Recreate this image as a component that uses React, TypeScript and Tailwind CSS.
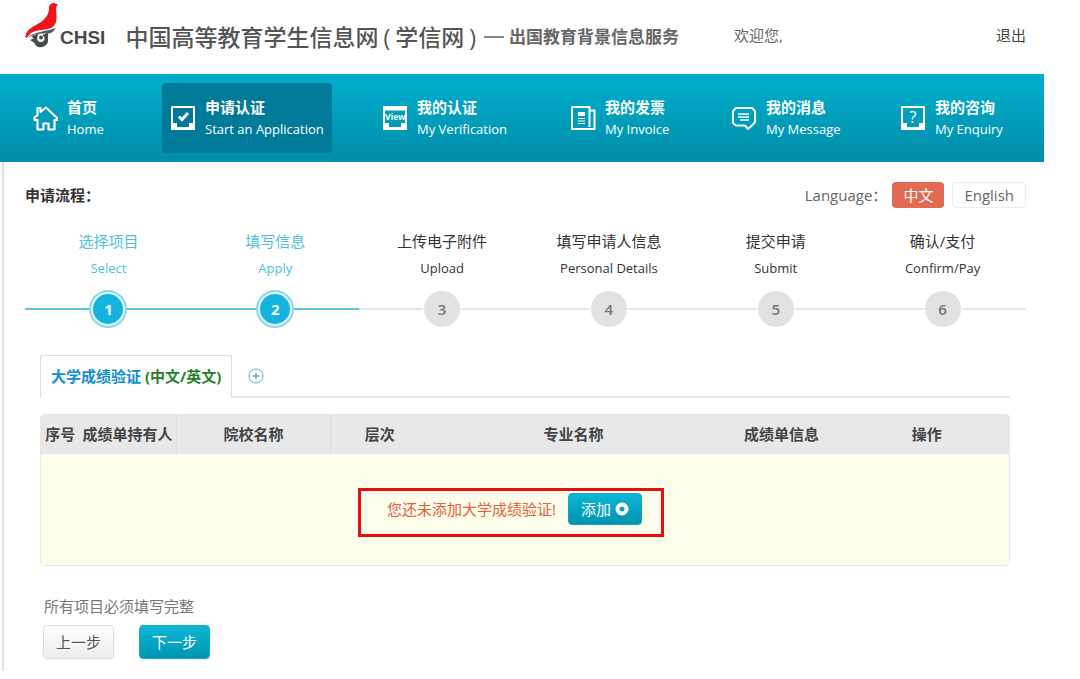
import type { ReactNode } from 'react'
import clsx from 'clsx'

interface NavItem {
  title: string
  subtitle: string
  icon: ReactNode
  active?: boolean
}

interface Step {
  title: string
  subtitle: string
  done?: boolean
}

function BirdLogo() {
  return (
    <svg viewBox="0 0 34 46" className="h-[46px] w-[34px] shrink-0" aria-hidden="true">
      <path
        d="M25 5C25.500 2 27.500 1 30 1L34 2.400L32.400 4.500C31.500 7 32.500 10 32.600 14C32.600 19 32 23 28 25.500C22 28.500 12 27.500 7 31L2 36.500C.8 34 2 31 4 28.500C7 25 12 23.500 17 20C22 16.500 25.500 11 25 5Z"
        fill="#f0141c"
      />
      <path d="M3.500 36C9 29.500 22 29.500 31.500 26C30.500 29.500 27 31.300 23.500 31.800C15 31 9 32.500 3.500 36Z" fill="#585c5d" />
      <path
        d="M7.500 34L15 31.500C12.500 34.500 12.500 39 16 40C19 40.500 21 38.500 20.500 35.500L18.500 33L24 31C24.500 34 23.500 37 24 40C22.500 44 18.500 46 14.500 45C12 44 11 42.500 10.500 41L6 38L9.500 36.500Z"
        fill="#454a4b"
      />
      <circle cx="17" cy="35.500" r="2" fill="#454a4b" />
    </svg>
  )
}

function NavIcon({ children }: { children: ReactNode }) {
  return (
    <svg viewBox="0 0 26 26" className="h-[26px] w-[26px] shrink-0" fill="none" stroke="white" strokeWidth="2" aria-hidden="true">
      {children}
    </svg>
  )
}

function Tray({ children }: { children: ReactNode }) {
  return (
    <NavIcon>
      <rect x="2" y="2" width="22" height="22" />
      <path d="M1 18H7V22H19V18H25V25H1Z" fill="white" stroke="none" />
      {children}
    </NavIcon>
  )
}

const navItems: NavItem[] = [
  {
    title: '首页',
    subtitle: 'Home',
    icon: (
      <NavIcon>
        <path
          d="M2.500 12.500L5.500 10V3H8.500V7L14 2.500L25 13V15H22.500V24.500H16.500V18.500H11.500V24.500H5.500V15H2.500Z"
          strokeWidth="2.200"
          strokeLinejoin="round"
        />
      </NavIcon>
    ),
  },
  {
    title: '申请认证',
    subtitle: 'Start an Application',
    active: true,
    icon: (
      <Tray>
        <path d="M9 11.500L12 14.500L18 8" strokeWidth="3" />
      </Tray>
    ),
  },
  {
    title: '我的认证',
    subtitle: 'My Verification',
    icon: (
      <Tray>
        <path d="M2 4H24" strokeWidth="3" />
        <text x="13" y="15" textAnchor="middle" fill="white" stroke="none" fontSize="9" fontWeight="700" fontFamily="Liberation Sans, sans-serif">
          View
        </text>
      </Tray>
    ),
  },
  {
    title: '我的发票',
    subtitle: 'My Invoice',
    icon: (
      <NavIcon>
        <path d="M19.500 22V2H2V24H24.500V5.500H20" />
        <path d="M8 9H15" strokeWidth="4" />
        <path d="M8 13.500H15M8 16H15M8 18.500H15" strokeWidth="1" />
      </NavIcon>
    ),
  },
  {
    title: '我的消息',
    subtitle: 'My Message',
    icon: (
      <NavIcon>
        <path d="M5 3H21L24 6V17L21 20.500L17 24L14 20.500H5L2 18V6Z" strokeLinejoin="round" />
        <path d="M7 9H18M7 12H18M9 15H18" strokeWidth="1.500" />
      </NavIcon>
    ),
  },
  {
    title: '我的咨询',
    subtitle: 'My Enquiry',
    icon: (
      <Tray>
        <text x="13" y="18" textAnchor="middle" fill="white" stroke="none" fontSize="16" fontFamily="Open Sans, sans-serif">
          ?
        </text>
      </Tray>
    ),
  },
]

const steps: Step[] = [
  { title: '选择项目', subtitle: 'Select', done: true },
  { title: '填写信息', subtitle: 'Apply', done: true },
  { title: '上传电子附件', subtitle: 'Upload' },
  { title: '填写申请人信息', subtitle: 'Personal Details' },
  { title: '提交申请', subtitle: 'Submit' },
  { title: '确认/支付', subtitle: 'Confirm/Pay' },
]

const columns = [
  { label: '序号', className: 'w-[4%]' },
  { label: '成绩单持有人', className: 'w-[10%] border-r border-[#dcdcdc]' },
  { label: '院校名称', className: 'w-[16%] border-r border-[#dcdcdc]' },
  { label: '层次', className: 'w-[10%]' },
  { label: '专业名称', className: 'w-[30%]' },
  { label: '成绩单信息', className: 'w-[13%]' },
  { label: '操作', className: 'w-[17%]' },
]

function Header() {
  return (
    <header className="flex items-center pb-6 pl-6 pr-[18px]">
      <a href="#" className="flex items-end text-[#4a4a4a]">
        <BirdLogo />
        <span className="ml-[2px] font-['Liberation_Sans',sans-serif] text-[19px] leading-[20px] font-bold">CHSI</span>
      </a>
      <h1 className="ml-5 flex items-center pt-6 text-[23px] leading-[26px] font-medium whitespace-nowrap text-[#555]">
        <span>中国高等教育学生信息网</span>
        <span className="mx-[5px]">(</span>
        <span>学信网</span>
        <span className="ml-[5px]">)</span>
        <span className="ml-2 h-[2px] w-5 bg-[#888]" />
        <span className="ml-[5px] text-[17px] font-bold text-[#666]">出国教育背景信息服务</span>
      </h1>
      <span className="ml-auto w-[262px] pt-5 text-[15px] leading-6 text-[#666]">欢迎您,</span>
      <a href="#" className="pt-5 text-[15px] leading-6 whitespace-nowrap text-[#444]">
        退出
      </a>
    </header>
  )
}

function MainNav() {
  return (
    <nav className="grid grid-cols-[138fr_212fr_188fr_161fr_169fr_152fr] bg-linear-to-b from-[#00afcd] to-[#008daa] py-[9px] pl-6">
      {navItems.map((item) => (
        <a
          key={item.title}
          href="#"
          className={clsx(
            'flex items-center gap-[9px] justify-self-start rounded px-2 py-[13px] whitespace-nowrap text-white',
            item.active && 'bg-[#007a99]',
          )}
        >
          {item.icon}
          <span className="flex flex-col">
            <span className="text-[15px] leading-[22px] font-bold">{item.title}</span>
            <span className="text-[13px] leading-[22px]">{item.subtitle}</span>
          </span>
        </a>
      ))}
    </nav>
  )
}

function StepList() {
  return (
    <ol className="mt-5 grid grid-cols-6">
      {steps.map((step, index) => (
        <li key={step.title} className={clsx('text-center', step.done ? 'text-[#4fc0e0]' : 'text-[#333]')}>
          <div className="text-[15px] leading-[27px]">{step.title}</div>
          <div className="text-[13px] leading-[27px]">{step.subtitle}</div>
          <div className="mt-2 flex items-center">
            <span className={clsx('h-[2px] flex-1', step.done ? 'bg-[#5cc3de]' : 'bg-[#dfe8ef]')} />
            {step.done ? (
              <span className="flex h-[38px] w-[38px] items-center justify-center rounded-full border-2 border-[#8ed8ec] bg-[#e2f6fb]">
                <span className="flex h-[30px] w-[30px] items-center justify-center rounded-full bg-[#14b4df] text-[15px] font-bold text-white">
                  {index + 1}
                </span>
              </span>
            ) : (
              <span className="flex h-[38px] w-[38px] items-center justify-center rounded-full border border-white bg-[#e2e2e2] text-[15px] font-semibold text-[#777]">
                {index + 1}
              </span>
            )}
            <span className={clsx('h-[2px] flex-1', step.done ? 'bg-[#5cc3de]' : 'bg-[#dfe8ef]')} />
          </div>
        </li>
      ))}
    </ol>
  )
}

function TranscriptTable() {
  return (
    <table className="mt-4 w-full table-fixed border-separate border-spacing-0 rounded border border-[#e8e8e8]">
      <thead>
        <tr className="bg-[#e8e8e8]">
          {columns.map((column) => (
            <th
              key={column.label}
              scope="col"
              className={clsx('pt-[7px] pb-2 text-[15px] leading-6 font-bold whitespace-nowrap text-[#444]', column.className)}
            >
              {column.label}
            </th>
          ))}
        </tr>
      </thead>
      <tbody>
        <tr>
          <td colSpan={columns.length} className="bg-[#fcfdea] pt-[34px] pr-7 pb-7">
            <div className="mx-auto flex w-fit items-center border-3 border-[#e60f0f] pt-[2px] pr-[19px] pb-[9px] pl-[26px]">
              <span className="text-[15px] leading-6 whitespace-nowrap text-[#e5603c]">您还未添加大学成绩验证!</span>
              <button
                type="button"
                className="ml-3 flex h-8 items-center gap-1 rounded border border-[#1aa3bd] bg-linear-to-b from-[#0cb8d5] to-[#0093b0] px-3 text-[15px] whitespace-nowrap text-white"
              >
                添加
                <svg viewBox="0 0 14 14" className="h-[14px] w-[14px]" fill="none" stroke="white" strokeWidth="4" aria-hidden="true">
                  <circle cx="7" cy="7" r="4.500" />
                </svg>
              </button>
            </div>
          </td>
        </tr>
      </tbody>
    </table>
  )
}

export default function App() {
  return (
    <div className="min-h-screen bg-white font-['Open_Sans','Noto_Sans_CJK_SC',sans-serif]" lang="zh-CN">
      <div className="mr-9">
        <Header />
        <MainNav />

        <main className="ml-[2px] border-l-2 border-[#e2e2e2] pt-5 pr-[18px] pb-3 pl-[21px]">
          <div className="flex items-center text-[15px]">
            <h2 className="leading-[26px] font-bold text-[#333]">申请流程：</h2>
            <span className="ml-auto leading-[26px] text-[#666]">Language：</span>
            <button type="button" className="ml-[5px] h-[26px] rounded bg-[#e26a50] px-[11px] text-white">
              中文
            </button>
            <button type="button" className="ml-2 h-[26px] rounded border border-[#ececec] bg-white px-[11px] text-[#666]">
              English
            </button>
          </div>

          <StepList />

          <div className="mt-[27px] mr-4 ml-[15px]">
            <div className="flex items-stretch">
              <button
                type="button"
                className="rounded-t-xs border border-b-0 border-[#dedede] px-[10px] pt-2 pb-[10px] text-[15px] leading-6 font-bold whitespace-nowrap text-[#0f8fd0]"
              >
                大学成绩验证 <span className="text-[#1f7f2a]">(中文/英文)</span>
              </button>
              <div className="flex flex-1 items-center border-b-2 border-[#e4e4e4] pl-4">
                <button type="button" aria-label="添加项目">
                  <svg viewBox="0 0 16 16" className="h-4 w-4" fill="none" stroke="#5fa9d8" aria-hidden="true">
                    <circle cx="8" cy="8" r="7" />
                    <path d="M5 8H11M8 5V11" strokeWidth="1.500" />
                  </svg>
                </button>
              </div>
            </div>

            <TranscriptTable />

            <p className="mt-7 ml-1 text-[15px] leading-6 text-[#777]">所有项目必须填写完整</p>
            <div className="mt-[7px] ml-[3px] flex gap-[25px]">
              <button
                type="button"
                className="h-[34px] rounded border border-[#dedede] bg-linear-to-b from-white to-[#ececec] px-3 text-[15px] text-[#555] shadow-xs"
              >
                上一步
              </button>
              <button
                type="button"
                className="h-[34px] rounded border border-[#1aa9c4] bg-linear-to-b from-[#0cb8d5] to-[#0095b2] px-3 text-[15px] text-white shadow-xs"
              >
                下一步
              </button>
            </div>
          </div>
        </main>
      </div>
    </div>
  )
}
